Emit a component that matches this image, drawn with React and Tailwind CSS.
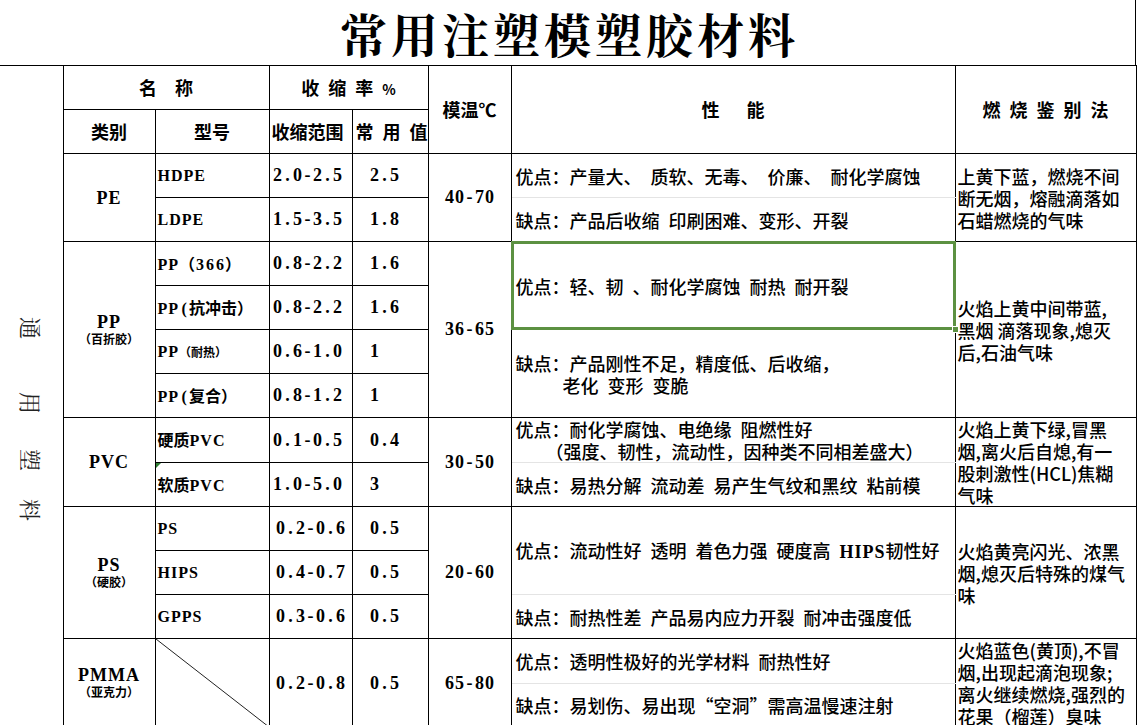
const CJK = "font-['Noto_Serif_CJK_SC','Noto_Sans_CJK_SC',serif]";

function M({ text }) {
  return (
    <>
      {Array.from(text).map((c, i) => {
        const code = c.charCodeAt(0);
        if (code < 128 && !/[A-Za-z]/.test(c)) {
          return (
            <span key={i} className="inline-block w-[10px] text-center">
              {c}
            </span>
          );
        }
        if (code < 128) {
          return (
            <span key={i} className="tracking-[1px]">
              {c}
            </span>
          );
        }
        return (
          <span key={i} className="font-['Noto_Sans_CJK_SC',sans-serif]">{c}</span>
        );
      })}
    </>
  );
}

function Td({ className = "", children, ...rest }) {
  return (
    <td className={"border border-black p-0 align-middle " + className} {...rest}>
      {children}
    </td>
  );
}

function Num({ children, pl = "pl-[3px]", rowSpan }) {
  return (
    <td rowSpan={rowSpan} className={"border border-black p-0 align-middle font-['Liberation_Serif','Noto_Sans_CJK_SC',serif] text-[18px] font-bold whitespace-nowrap " + pl}>
      <M text={children} />
    </td>
  );
}

function Model({ children, className = "" }) {
  return (
    <td className={"relative border border-black p-0 pl-[2px] align-middle font-['Liberation_Serif','Noto_Sans_CJK_SC',serif] text-[16px] font-bold whitespace-nowrap " + className}>
      {children}
    </td>
  );
}

function Temp({ children, rowSpan }) {
  return (
    <td rowSpan={rowSpan} className="border border-black p-0 align-middle text-center font-['Liberation_Serif','Noto_Sans_CJK_SC',serif] text-[18px] font-bold whitespace-nowrap">
      <M text={children} />
    </td>
  );
}

function Pro({ children, rowSpan, className = "" }) {
  return (
    <td rowSpan={rowSpan} className={"border border-black border-b-[#e4e4e4] p-0 pl-[4px] align-middle text-[18px] leading-[22px] font-medium whitespace-nowrap font-['Noto_Sans_CJK_SC',sans-serif] " + className}>
      {children}
    </td>
  );
}

function Con({ children, rowSpan, className = "" }) {
  return (
    <td rowSpan={rowSpan} className={"border border-black border-t-[#e4e4e4] p-0 pl-[4px] align-middle text-[18px] leading-[22px] font-medium whitespace-nowrap font-['Noto_Sans_CJK_SC',sans-serif] " + className}>
      {children}
    </td>
  );
}

function Burn({ rowSpan, lines, className = "" }) {
  return (
    <td rowSpan={rowSpan} className={"border border-black p-0 pl-[2px] align-middle text-[18px] leading-[22px] font-medium whitespace-nowrap font-['Noto_Sans_CJK_SC',sans-serif] " + className}>
      {lines.map((l, i) => (
        <div key={i}>{l}</div>
      ))}
    </td>
  );
}

function Cat({ rowSpan, name, sub }) {
  return (
    <td rowSpan={rowSpan} className="border border-black p-0 align-middle text-center">
      <div className="font-['Liberation_Serif','Noto_Sans_CJK_SC',serif] text-[18px] font-bold leading-[18px] tracking-[1px]">{name}</div>
      {sub && <div className="font-['Noto_Sans_CJK_SC',sans-serif] text-[12px] font-bold leading-[16px]">{sub}</div>}
    </td>
  );
}

const E = "\u2002";

export default function App() {
  return (
    <div className="w-[1138px] h-[725px] overflow-hidden bg-white text-black font-['Noto_Sans_CJK_SC',sans-serif]">
      <div className="w-[1136px] h-[65px] border-r border-black flex items-center justify-center">
        <h1 className={"text-[47px] font-bold leading-[52px] tracking-[4px] pl-[4px] " + CJK}>常用注塑模塑胶材料</h1>
      </div>
      <table className="table-fixed border-collapse w-[1136px]">
        <colgroup>
          <col className="w-[63px]" />
          <col className="w-[92px]" />
          <col className="w-[114px]" />
          <col className="w-[83px]" />
          <col className="w-[76px]" />
          <col className="w-[83px]" />
          <col className="w-[444px]" />
          <col className="w-[181px]" />
        </colgroup>
        <tbody>
          <tr className="h-[44px]">
            <td rowSpan={15} className="border-t border-r border-black p-0 align-top">
              <div className={"flex flex-col items-center pt-[251px] text-[22px] leading-[22px] text-[#222] font-normal " + CJK}>
                <span className="inline-block rotate-90">通</span>
                <span className="inline-block rotate-90 mt-[53px]">用</span>
                <span className="inline-block rotate-90 mt-[35px]">塑</span>
                <span className="inline-block rotate-90 mt-[28px]">料</span>
              </div>
            </td>
            <Td colSpan={2} className="text-center text-[18px] font-bold">名{"\u2003"}称</Td>
            <Td colSpan={2} className="text-center text-[18px] font-bold">收{E}缩{E}率{E}<span className="text-[14px]">%</span></Td>
            <Td rowSpan={2} className="text-center text-[18px] font-bold">模温℃</Td>
            <Td rowSpan={2} className="text-center text-[18px] font-bold">性{"\u2003"}{"\u2002"}能</Td>
            <Td rowSpan={2} className="text-center text-[18px] font-bold">燃{E}烧{E}鉴{E}别{E}法</Td>
          </tr>
          <tr className="h-[44px]">
            <Td className="text-center text-[18px] font-bold">类别</Td>
            <Td className="text-center text-[18px] font-bold">型号</Td>
            <Td className="pl-[2px] text-[18px] font-bold whitespace-nowrap">收缩范围</Td>
            <Td className="pl-[3px] text-[18px] font-bold whitespace-nowrap">常{E}用{E}值</Td>
          </tr>

          {/* PE */}
          <tr className="h-[44px]">
            <Cat rowSpan={2} name="PE" />
            <Model><M text="HDPE" /></Model>
            <Num>2.0-2.5</Num>
            <Num pl="pl-[17px]">2.5</Num>
            <Temp rowSpan={2}>40-70</Temp>
            <Pro>优点：产量大、{E}质软、无毒、{E}价廉、{E}耐化学腐蚀</Pro>
            <Burn rowSpan={2} lines={["上黄下蓝，燃烧不间", "断无烟，熔融滴落如", "石蜡燃烧的气味"]} />
          </tr>
          <tr className="h-[44px]">
            <Model><M text="LDPE" /></Model>
            <Num>1.5-3.5</Num>
            <Num pl="pl-[17px]">1.8</Num>
            <Con>缺点：产品后收缩{E}印刷困难、变形、开裂</Con>
          </tr>

          {/* PP */}
          <tr className="h-[44px]">
            <Cat rowSpan={4} name="PP" sub="（百折胶）" />
            <Model><M text="PP（366）" /></Model>
            <Num>0.8-2.2</Num>
            <Num pl="pl-[17px]">1.6</Num>
            <Temp rowSpan={4}>36-65</Temp>
            <td rowSpan={2} className="relative border border-black border-b-[#e4e4e4] p-0 pl-[4px] align-middle text-[18px] leading-[22px] font-medium whitespace-nowrap">
              优点：轻、韧{E}、耐化学腐蚀{E}耐热{E}耐开裂
              <div className="absolute -left-[1px] -top-[1px] -right-[1px] -bottom-[1px] border-[3px] border-[#5c9141] pointer-events-none"></div>
              <div className="absolute -right-[4px] -bottom-[4px] w-[7px] h-[7px] bg-[#5c9141] border border-white"></div>
            </td>
            <Burn rowSpan={4} lines={["火焰上黄中间带蓝,", "黑烟 滴落现象,熄灭", "后,石油气味"]} />
          </tr>
          <tr className="h-[44px]">
            <Model><M text="PP(抗冲击）" /></Model>
            <Num>0.8-2.2</Num>
            <Num pl="pl-[17px]">1.6</Num>
          </tr>
          <tr className="h-[44px]">
            <Model><M text="PP" /><span className="text-[12px] font-['Noto_Sans_CJK_SC',sans-serif]">（耐热）</span></Model>
            <Num>0.6-1.0</Num>
            <Num pl="pl-[17px]">1</Num>
            <Con rowSpan={2}>
              <div>缺点：产品刚性不足，精度低、后收缩，</div>
              <div className="pl-[47px]">老化{E}变形{E}变脆</div>
            </Con>
          </tr>
          <tr className="h-[44px]">
            <Model><M text="PP(复合）" /></Model>
            <Num>0.8-1.2</Num>
            <Num pl="pl-[17px]">1</Num>
          </tr>

          {/* PVC */}
          <tr className="h-[44px]">
            <Cat rowSpan={2} name="PVC" />
            <Model><M text="硬质PVC" /></Model>
            <Num>0.1-0.5</Num>
            <Num pl="pl-[17px]">0.4</Num>
            <Temp rowSpan={2}>30-50</Temp>
            <Pro>
              <div>优点：耐化学腐蚀、电绝缘{E}阻燃性好</div>
              <div className="pl-[30px]">（强度、韧性，流动性，因种类不同相差盛大）</div>
            </Pro>
            <Burn rowSpan={2} lines={["火焰上黄下绿,冒黑", "烟,离火后自熄,有一", "股刺激性(HCL)焦糊", "气味"]} />
          </tr>
          <tr className="h-[44px]">
            <Model>
              <div className="absolute left-0 top-0 w-0 h-0 border-t-[5px] border-t-[#2e7d32] border-r-[5px] border-r-transparent"></div>
              <M text="软质PVC" />
            </Model>
            <Num>1.0-5.0</Num>
            <Num pl="pl-[17px]">3</Num>
            <Con>缺点：易热分解{E}流动差{E}易产生气纹和黑纹{E}粘前模</Con>
          </tr>

          {/* PS */}
          <tr className="h-[44px]">
            <Cat rowSpan={3} name="PS" sub="（硬胶）" />
            <Model><M text="PS" /></Model>
            <Num pl="pl-[6px]">0.2-0.6</Num>
            <Num pl="pl-[17px]">0.5</Num>
            <Temp rowSpan={3}>20-60</Temp>
            <Pro rowSpan={2}>优点：流动性好{E}透明{E}着色力强{E}硬度高{E}<span className="font-['Liberation_Serif',serif] font-bold tracking-[1px]">HIPS</span>韧性好</Pro>
            <Burn rowSpan={3} lines={["火焰黄亮闪光、浓黑", "烟,熄灭后特殊的煤气", "味"]} />
          </tr>
          <tr className="h-[44px]">
            <Model><M text="HIPS" /></Model>
            <Num pl="pl-[6px]">0.4-0.7</Num>
            <Num pl="pl-[17px]">0.5</Num>
          </tr>
          <tr className="h-[44px]">
            <Model><M text="GPPS" /></Model>
            <Num pl="pl-[6px]">0.3-0.6</Num>
            <Num pl="pl-[17px]">0.5</Num>
            <Con>缺点：耐热性差{E}产品易内应力开裂{E}耐冲击强度低</Con>
          </tr>

          {/* PMMA */}
          <tr className="h-[44px]">
            <Cat rowSpan={2} name="PMMA" sub="（亚克力）" />
            <td rowSpan={2} className="relative border border-black p-0">
              <svg className="absolute inset-0 w-full h-full" preserveAspectRatio="none" viewBox="0 0 100 100">
                <line x1="0" y1="0" x2="100" y2="100" stroke="#222" strokeWidth="1" vectorEffect="non-scaling-stroke" />
              </svg>
            </td>
            <Num rowSpan={2} pl="pl-[6px]">0.2-0.8</Num>
            <Num rowSpan={2} pl="pl-[17px]">0.5</Num>
            <Temp rowSpan={2}>65-80</Temp>
            <Pro>优点：透明性极好的光学材料{E}耐热性好</Pro>
            <Burn rowSpan={2} className="leading-[21px]" lines={["火焰蓝色(黄顶),不冒", "烟,出现起滴泡现象;", "离火继续燃烧,强烈的", "花果（榴莲）臭味"]} />
          </tr>
          <tr className="h-[44px]">
            <Con>缺点：易划伤、易出现“空洞”需高温慢速注射</Con>
          </tr>
        </tbody>
      </table>
    </div>
  );
}
